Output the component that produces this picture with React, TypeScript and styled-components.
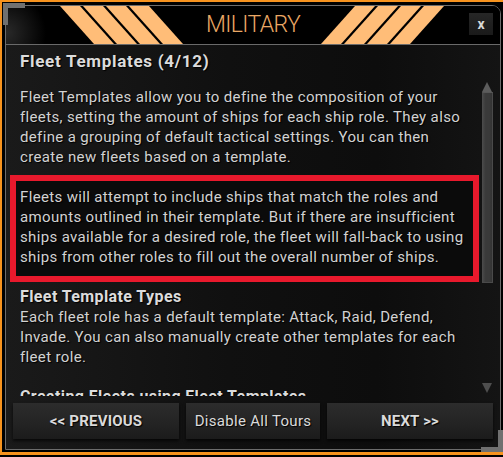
import React from 'react';
import styled, { createGlobalStyle } from 'styled-components';

const GlobalStyle = createGlobalStyle`
  html, body {
    margin: 0;
    padding: 0;
    background: #000;
    overflow: hidden;
  }
  body {
    font-family: Roboto, 'Liberation Sans', sans-serif;
  }
`;

const ORANGE = '#f7931e';
const STRIPE = '#ffbd78';
const FRAME_GRAY = '#707070';

const Frame = styled.div`
  position: relative;
  box-sizing: border-box;
  width: 506px;
  height: 455px;
  border: 2px solid ${ORANGE};
  border-bottom-width: 3px;
  padding: 3px 3px 2px 3px;
  background: #000;
`;

const CornerTopLeft = styled.div`
  position: absolute;
  left: 1px;
  top: 1px;
  width: 17px;
  height: 17px;
  border-top: 5px solid ${FRAME_GRAY};
  border-left: 5px solid ${FRAME_GRAY};
  z-index: 3;
`;

const CornerBottomRight = styled.div`
  position: absolute;
  left: 479px;
  top: 428px;
  width: 17px;
  height: 17px;
  border-right: 5px solid ${FRAME_GRAY};
  border-bottom: 5px solid ${FRAME_GRAY};
  z-index: 3;
`;

const Panel = styled.div`
  box-sizing: border-box;
  width: 496px;
  height: 445px;
  border: 1px solid #6c6c6c;
  border-top-right-radius: 9px;
  display: flex;
  flex-direction: column;
  overflow: hidden;
  background: linear-gradient(90deg, #1a1a1a 0%, #101010 45%, #0d0d0d 75%, #141414 100%);
`;

const Header = styled.header`
  position: relative;
  height: 38px;
  flex: none;
  border-bottom: 1px solid #6a6a6a;
  display: flex;
  align-items: center;
  justify-content: center;
  background: radial-gradient(ellipse 40px 40px at 0% 70%, #2a2a2a 0%, #000 100%), #000;
`;

const HeaderArt = styled.svg`
  position: absolute;
  inset: 0;
  width: 100%;
  height: 100%;
`;

const Title = styled.h1`
  position: relative;
  margin: 0;
  font-family: Roboto, 'Liberation Sans', sans-serif;
  font-weight: 300;
  font-size: 23px;
  letter-spacing: -0.6px;
  color: #eba865;
  line-height: 38px;
`;

const CloseButton = styled.button`
  position: absolute;
  right: 7px;
  top: 7px;
  width: 24px;
  height: 22px;
  padding: 0;
  border: none;
  background: linear-gradient(#262626, #1a1a1a);
  color: #d8d8d8;
  font-family: Roboto, 'Liberation Sans', sans-serif;
  font-weight: 700;
  font-size: 14px;
  line-height: 20px;
  cursor: pointer;
`;

const Body = styled.section`
  display: flex;
  height: 351px;
  flex: none;
  padding: 0 7px 0 4px;
`;

const Content = styled.div`
  flex: 1;
  overflow: hidden;
  padding-top: 4px;
  color: #d2d2d2;
  font-size: 15px;
  line-height: 20px;
  letter-spacing: 0.35px;
  text-shadow: 1px 1px 1px #000;
`;

const PageTitle = styled.h2`
  margin: 0;
  padding: 0 10px;
  font-size: 17px;
  font-weight: 700;
  line-height: 24px;
  letter-spacing: 0.7px;
  color: #dcdcdc;
`;

const SectionTitle = styled.h3<{ $gap: number }>`
  margin: ${({ $gap }) => $gap}px 0 0;
  padding: 0 10px;
  font-size: 16px;
  font-weight: 700;
  line-height: 21px;
  letter-spacing: 0.4px;
  color: #dcdcdc;
  white-space: nowrap;
`;

const Paragraph = styled.p<{ $gap: number }>`
  margin: ${({ $gap }) => $gap}px 0 0;
  padding: 0 10px;
  white-space: nowrap;
`;

const Highlight = styled.p`
  margin: 8px 0 0;
  padding: 6px 4px 9px;
  border: 6px solid #e8192c;
  background: #0b0b0b;
  white-space: nowrap;
`;

const ScrollTrack = styled.div`
  width: 12px;
  margin-left: 2px;
  padding: 37px 0 3px;
  display: flex;
  flex-direction: column;
  align-items: center;
`;

const Arrow = styled.div<{ $dir: 'up' | 'down' }>`
  width: 0;
  height: 0;
  border-left: 5px solid transparent;
  border-right: 5px solid transparent;
  ${({ $dir }) =>
    $dir === 'up'
      ? 'border-bottom: 10px solid #5c5c5c;'
      : 'border-top: 10px solid #4e4e4e;'}
`;

const Thumb = styled.div`
  box-sizing: border-box;
  width: 11px;
  height: 191px;
  background: linear-gradient(90deg, #474747 0%, #3a3a3a 30%, #3a3a3a 70%, #333 100%);
  border: 1px solid #4a4a4a;
  border-top-color: #575757;
`;

const Spacer = styled.div`
  flex: 1;
`;

const Footer = styled.footer`
  display: grid;
  grid-template-columns: 1fr 134px 1fr;
  gap: 7px;
  padding: 7px 7px 10px;
  flex: none;
`;

const TourButton = styled.button<{ $bold?: boolean }>`
  height: 36px;
  border: none;
  padding: 0;
  background: linear-gradient(#2c2c2c 0%, #232323 60%, #1b1b1b 100%);
  box-shadow: 0 2px 3px rgba(0, 0, 0, 0.7);
  color: #dadada;
  font-family: Roboto, 'Liberation Sans', sans-serif;
  font-size: 15px;
  font-weight: ${({ $bold }) => ($bold ? 700 : 400)};
  letter-spacing: ${({ $bold }) => ($bold ? '0.2px' : '0.3px')};
  text-shadow: 1px 1px 1px #000;
  cursor: pointer;
`;

const stripeOffsets = [0, 1, 2, 3].map((i) => 54 + 23 * i);

export default function App() {
  return (
    <>
      <GlobalStyle />
      <Frame>
        <CornerTopLeft />
        <CornerBottomRight />
        <Panel>
          <Header>
            <HeaderArt viewBox="0 0 494 38" preserveAspectRatio="none">
              {stripeOffsets.map((x) => (
                <polygon
                  key={`l${x}`}
                  points={`${x},0 ${x + 20},0 ${x + 54},38 ${x + 34},38`}
                  fill={STRIPE}
                />
              ))}
              {stripeOffsets.map((x) => (
                <polygon
                  key={`r${x}`}
                  points={`${492 - x},0 ${472 - x},0 ${438 - x},38 ${458 - x},38`}
                  fill={STRIPE}
                />
              ))}
            </HeaderArt>
            <Title>MILITARY</Title>
            <CloseButton>x</CloseButton>
          </Header>
          <Body>
            <Content>
              <PageTitle>Fleet Templates (4/12)</PageTitle>
              <Paragraph $gap={14}>
                Fleet Templates allow you to define the composition of your
                <br />
                fleets, setting the amount of ships for each ship role. They also
                <br />
                define a grouping of default tactical settings. You can then
                <br />
                create new fleets based on a template.
              </Paragraph>
              <Highlight>
                Fleets will attempt to include ships that match the roles and
                <br />
                amounts outlined in their template. But if there are insufficient
                <br />
                ships available for a desired role, the fleet will fall-back to using
                <br />
                ships from other roles to fill out the overall number of ships.
              </Highlight>
              <SectionTitle $gap={4}>Fleet Template Types</SectionTitle>
              <Paragraph $gap={0}>
                Each fleet role has a default template: Attack, Raid, Defend,
                <br />
                Invade. You can also manually create other templates for each
                <br />
                fleet role.
              </Paragraph>
              <SectionTitle $gap={19}>Creating Fleets using Fleet Templates</SectionTitle>
            </Content>
            <ScrollTrack>
              <Arrow $dir="up" />
              <Thumb />
              <Spacer />
              <Arrow $dir="down" />
            </ScrollTrack>
          </Body>
          <Footer>
            <TourButton $bold>&lt;&lt; PREVIOUS</TourButton>
            <TourButton>Disable All Tours</TourButton>
            <TourButton $bold>NEXT &gt;&gt;</TourButton>
          </Footer>
        </Panel>
      </Frame>
    </>
  );
}
